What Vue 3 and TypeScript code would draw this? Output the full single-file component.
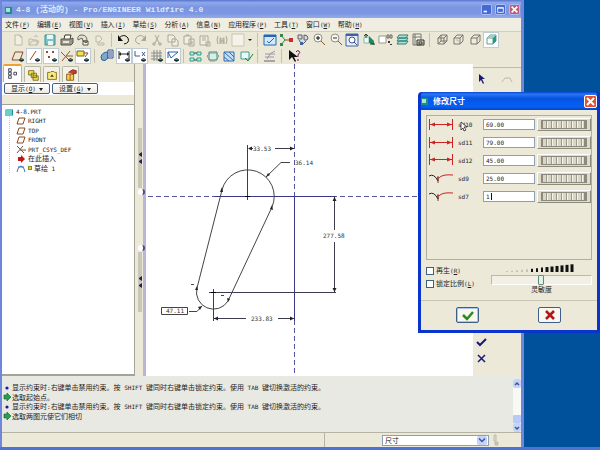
<script setup lang="ts">
import { ref } from 'vue'

// [path, stroke, fill]
type Shape = [string, string, string]
interface Tool { name: string; art: string; on?: boolean; off?: boolean }
interface Group { key: string; tools: Tool[] }

const INK = '#33332c'
const DIM = '#bdb9a8'
const GRN = '#2e9a86'
const NO = 'none'
const EYE: Shape[] = [
  ['M9 12q2.500-3 5 0q-2.500 3-5 0z', '#2b4a50', '#5c8a8c'],
  ['M10 12h3v1h-3z', NO, '#10282c'],
]
const cube = 'M4 6h6v6h-6zM4 6l3-3h6l-3 3M13 3v6l-3 3'

const art: Record<string, Shape[]> = {
  new: [['M5 3h5l2 2v8h-7zM10 3v2h2', DIM, '#f1efe2']],
  open: [['M3 13v-6h3l1 1h4v5zM3 13l3-4h7l-2 4M8 5q2-3 4 0', DIM, NO]],
  save: [['M3 3h10v10h-10z', '#3d8f94', '#7cc4c4'], ['M5 3h6v4h-6zM6 9h5v4h-5z', NO, '#e8f6f4']],
  print: [['M5 7l1-4h6l-1 4', INK, '#ffffff'], ['M2 7h10l2-1v5l-2 2h-10z', '#55554c', '#9a988c'], ['M4 9h6v2h-6z', NO, '#e9e6d8']],
  mail: [['M3 8q-1-5 4-5q5 0 5 6h-4l-1-3z', '#66665c', '#e4e2d6'], ['M8 9h5v4h-5zM8 9l3 2 2-2', '#55554c', '#fff']],
  link: [['M5 4h4l2 3-3 3h-3zM7 11h6v2h-6z', DIM, '#efecdf']],
  undo: [['M3 6q5-5 9 0q2 5-4 6', '#111', NO], ['M2 3v6h5z', NO, '#111']],
  redo: [['M13 6q-5-5-9 0q-2 5 4 6', '#aaa798', NO], ['M14 3v6h-5z', NO, '#aaa798']],
  cut: [['M6 3l4 8M10 3l-4 8M4 11h2v2h-2zM10 11h2v2h-2z', '#aaa798', NO]],
  copy: [['M3 3h5l2 2v5h-7zM7 7h4l2 2v5h-6z', '#aaa798', '#f1efe2']],
  paste: [['M3 4h7v8h-7zM5 3h3M8 7h5v7h-5zM9 10h3M9 12h3', '#aaa798', '#f1efe2']],
  special: [['M3 4h8v9h-8zM5 6h4M5 8h4M9 10h4v4h-4z', '#aaa798', '#f1efe2']],
  find: [['M4 4q-2 4 0 8M12 4q2 4 0 8M6 12v-6h1v6M10 12v-6h-1v6M6 9h4', '#aaa798', NO]],
  box: [['M2 2h12v12h-12z', '#c9c5b2', '#f5f3e9']],
  win: [['M2 3h12v10h-12z', '#2466b4', '#d3e9fb'], ['M2 3h12v2h-12z', NO, '#2466b4'], ['M5 9l2 2 5-5', '#2466b4', NO]],
  spin: [['M3 3l4 5-4 5', '#2c8a50', NO], ['M7 8h7', '#c03030', NO], ['M2 2h3v3h-3zM2 11h3v3h-3z', NO, '#2c8a50'], ['M11 6h4v4h-4z', NO, '#c03030']],
  orient: [['M3 3h4v4h-4zM9 3q4 0 4 3t-4 2zM4 8l3 5 4-4', '#5a5e70', '#d8d8e0'], ['M5 10h3v3h-3z', NO, '#4064a0']],
  zin: [['M3 6a4 4 0 1 0 8 0a4 4 0 1 0-8 0', '#8f8f86', '#f8f6ee'], ['M5 6h4M7 4v4', '#111', NO], ['M10 9l4 4', '#8a5a20', NO]],
  zout: [['M3 6a4 4 0 1 0 8 0a4 4 0 1 0-8 0', '#8f8f86', '#f8f6ee'], ['M5 6h4', '#333', NO], ['M10 9l4 4', '#8a5a20', NO]],
  fit: [['M2 2h12v12h-12z', '#3d62a8', '#e8f0fb'], ['M2 2h12v2h-12z', NO, '#3d62a8'], ['M5 8a3 3 0 1 0 6 0a3 3 0 1 0-6 0M10 10l3 3', '#3d5288', '#fff']],
  reor: [['M3 5h5v6h-5z', '#8fb8a8', '#e5fff6'], ['M8 4v7l5 2v-4z', NO, '#1c8a5c'], ['M5 2v4M3 4l2-2 2 2M9 12h5', INK, NO]],
  views: [['M2 4h7v7h-7z', '#99968a', '#fff'], ['M10 3h2v3h-2zM13 3h2v3h-2z', '#66665c', NO], ['M11 9h2v2h-2zM13 12h2v1h-2z', NO, '#3a3a3a']],
  layers: [['M3 6l2-3h9l-2 3zM3 9l2-3h9l-2 3zM3 12l2-3h9l-2 3z', '#337f74', '#a9e6d8']],
  vmgr: [['M3 2h8v11h-8zM5 2v11M3 5h8', '#77776c', '#f3f1e6'], ['M7 8h7v5h-7z', INK, '#d0cec0'], ['M9 10h3v2h-3z', INK, '#fff']],
  wire: [[cube + 'M4 12l3-3h6M7 3v6', '#77776c', NO]],
  hid: [[cube, '#77776c', '#efecdf'], ['M7 9h3M7 6v3', '#bbb8a8', NO]],
  nohid: [[cube, '#77776c', '#efecdf']],
  shade: [[cube, '#6a9c94', '#f6fffb'], ['M10 6l3-3v6l-3 3z', NO, '#1b9d86'], ['M4 6l3-3h6l-3 3z', NO, '#8fd7ca']],
  plane: [['M2 12l3-8h8l-3 8z', '#8a4a28', NO], ...EYE],
  axis: [['M4 12l6-9', '#9a4a20', NO], ...EYE],
  pts: [['M3 3l2 2M5 3l-2 2M9 3l2 2M11 3l-2 2M5 8l2 2M7 8l-2 2', '#9a4a20', NO], ...EYE],
  csys: [['M2 4l9 9M11 3l-8 10M7 8h7', '#9a5a28', NO], ...EYE],
  note: [['M2 3h7v5h-7z', '#6a6420', '#f4e24c'], ['M9 5h4l-3 4', '#8a4a28', NO], ...EYE],
  skview: [['M2 9q1-5 7-5v6q-3 4-6 2z', '#2c5f90', '#79a9cc'], ['M9 2h5v8h-5z', '#30508c', '#eef4ff'], ['M10 4h3M10 6h3M10 8h3', '#30508c', NO]],
  dims: [['M3 3v8M13 3v8M3 6h10', '#222', NO], ['M3 6l2-2v4zM13 6l-2-2v4z', NO, '#222'], ...EYE],
  cons: [['M3 3v5h5M10 4l3 4M13 4l-3 4', '#3a5a9c', NO], ...EYE],
  grid: [['M5 2v11M8 2v11M11 2v8M2 5h11M2 8h11M2 11h7', '#8a8a90', NO], ...EYE],
  vert: [['M3 4h10l-7 6zM3 4v6', '#2f5fa8', NO], ...EYE],
  ends: [['M2 4h4v3h-4zM9 4h4v3h-4zM2 10h4v3h-4zM9 10h4v3h-4z', '#2f9c90', '#bdeee4'], ['M6 5h3M6 12h3', '#444', NO]],
  sel: [['M4 4h8v8h-8z', '#3d8f78', '#d8efe4'], ['M2 8l3-3 6 0 3 3-4 5h-5z', '#8b9a9c', NO]],
  hatch: [['M3 4h10v9h-10z', '#2f6fb4', '#c4def4'], ['M3 4l10 9M3 9l5 4M8 4l5 5', '#2f6fb4', NO]],
  ok: [['M3 4h8v7h-8z', '#459a90', '#e8faf4'], ['M7 10l3 3 5-7', '#158a30', NO]],
  sketch: [['M3 6h10M3 9h9M5 11q3-7 8-8', '#9a96ac', NO], ['M2 13h11', '#66607c', NO]],
  help: [['M3 2v10l3-3 3 5 1-1-2-4h4z', NO, '#111'], ['M10 4q1-2 3-1q2 1-1 4v2M12 11v2', '#7a1050', NO]],
}

const t = (s: string, on = ''): Tool[] =>
  s.split(' ').map((a) => ({ name: a, art: a, on: on.split(' ').includes(a) }))

const bars: Group[][] = [
  [
    { key: 'file', tools: t('new open save print mail link') },
    { key: 'edit', tools: t('undo redo cut copy paste special find box') },
    { key: 'view', tools: t('win spin orient zin zout fit reor views layers vmgr') },
    { key: 'model', tools: t('wire hid nohid shade', 'shade') },
  ],
  [
    { key: 'datum', tools: t('plane axis pts csys note', 'axis pts note') },
    { key: 'sketcher', tools: t('skview dims cons grid vert', 'dims cons vert') },
    { key: 'diagnose', tools: t('ends sel hatch ok') },
    { key: 'single', tools: t('sketch') },
    { key: 'single', tools: t('help') },
  ],
]

const menus = [
  ['文件', 'F'], ['编辑', 'E'], ['视图', 'V'], ['插入', 'I'], ['草绘', 'S'], ['分析', 'A'],
  ['信息', 'N'], ['应用程序', 'P'], ['工具', 'T'], ['窗口', 'W'], ['帮助', 'H'],
]

const tree = [
  { kind: 'plane', text: 'RIGHT' },
  { kind: 'plane', text: 'TOP' },
  { kind: 'plane', text: 'FRONT' },
  { kind: 'csys', text: 'PRT_CSYS_DEF' },
  { kind: 'insert', text: '在此插入' },
  { kind: 'sketch', text: '草绘 1' },
]

const hint = '显示约束时:右键单击禁用约束。按 SHIFT 键同时右键单击锁定约束。使用 TAB 键切换激活的约束。'
const messages = [
  { step: false, text: hint },
  { step: true, text: '选取起始点。' },
  { step: false, text: hint },
  { step: true, text: '选取两图元使它们相切' },
]
// Splits mixed text so that Latin runs can take the half-width face.
const runs = (s: string) =>
  s.split(/([\x20-\x7e]+)/).filter(Boolean).map((x) => ({ x, latin: /^[\x20-\x7e]/.test(x) }))

const dims = ref([
  { id: 'sd10', value: '69.00', tangent: false },
  { id: 'sd11', value: '79.00', tangent: false },
  { id: 'sd12', value: '45.00', tangent: false },
  { id: 'sd9', value: '25.00', tangent: true },
  { id: 'sd7', value: '1', tangent: true },
])
const sensitivity = ref(49)
const regen = ref(false)
const lock = ref(false)
const filter = ref('尺寸')
</script>

<template>
  <div class="desktop">
    <main class="window">
      <header class="titlebar">
        <svg class="app-icon" viewBox="0 0 8 8"><path d="M0 1h7v7h-7z" fill="#1f8f80" /><path d="M1 2h4v4h-4z" fill="#9fe8d8" /></svg>
        <h1><span v-for="(r, i) in runs('4-8 (活动的) - Pro/ENGINEER Wildfire 4.0')" :key="i" :class="{ wide: r.latin }">{{ r.x }}</span></h1>
        <div class="caption">
          <button aria-label="最小化"><svg viewBox="0 0 11 11"><path d="M2 8h4" stroke="#fff" stroke-width="2" /></svg></button>
          <button aria-label="最大化"><svg viewBox="0 0 11 11"><path d="M2 3h7v6h-7zM2 4h7" stroke="#fff" fill="none" /></svg></button>
          <button class="close" aria-label="关闭"><svg viewBox="0 0 11 11"><path d="M2 2l7 7M9 2l-7 7" stroke="#fff" stroke-width="2" /></svg></button>
        </div>
      </header>

      <nav class="menubar">
        <button v-for="m in menus" :key="m[1]">{{ m[0] }}<span class="latin">(<u>{{ m[1] }}</u>)</span></button>
      </nav>

      <div class="toolbars">
        <div v-for="(bar, b) in bars" :key="b" class="toolbar">
          <div v-for="(g, gi) in bar" :key="gi" class="group" :class="g.key">
            <button v-for="tool in g.tools" :key="tool.name" :class="{ on: tool.on }" :aria-label="tool.name">
              <svg viewBox="0 0 16 16"><path v-for="(s, i) in art[tool.art]" :key="i" :d="s[0]" :stroke="s[1]" :fill="s[2]" /></svg>
            </button>
            <span v-if="g.key === 'edit'" class="drop"></span>
          </div>
        </div>
      </div>

      <div class="work">
        <aside class="navigator">
          <div class="tabs">
            <button class="active" aria-label="模型树"><svg viewBox="0 0 16 16"><path d="M3 2h3v3h-3zM3 6h3v3h-3zM3 10h3v3h-3zM9 6h3v3h-3z" fill="#fff" stroke="#33334a" /></svg></button>
            <button aria-label="文件夹"><svg viewBox="0 0 16 16"><path d="M3 3h6v5h-6zM6 6h6v5h-6zM8 9h6v5h-6z" fill="#f2e254" stroke="#7a6a18" /></svg></button>
            <button aria-label="收藏夹"><svg viewBox="0 0 16 16"><path d="M3 5h3l1-1h3l1 1h2v8h-10z" fill="#f7ec7a" stroke="#7a6a18" /><path d="M8 7l2 3h-4z" fill="#333" /></svg></button>
            <button aria-label="连接"><svg viewBox="0 0 16 16"><path d="M3 7h8v7h-8z" fill="#f2d24c" stroke="#7a5a18" /><path d="M5 5l5-3 4 1v3l-4 1" fill="#c8402c" stroke="#70281c" /><path d="M7 7v7" stroke="#b04828" /></svg></button>
          </div>
          <div class="actions">
            <button>显示<span class="latin">(<u>O</u>)</span><i class="caret"></i></button>
            <button>设置<span class="latin">(<u>G</u>)</span><i class="caret"></i></button>
          </div>
          <div class="tree">
            <p><svg class="part" viewBox="0 0 8 8"><path d="M0 2l1-1h7l-1 1zM0 2h7v6h-7z" fill="#68cfd0" /><path d="M7 2l1-1v6l-1 1z" fill="#1f8c94" /></svg><span class="latin">4-8.PRT</span></p>
            <ul>
              <li v-for="n in tree" :key="n.text">
                <svg viewBox="0 0 10 9">
                  <path v-if="n.kind === 'plane'" d="M1 8l2-6h6l-2 6z" fill="none" stroke="#8a4a20" />
                  <path v-else-if="n.kind === 'csys'" d="M1 1l7 7M7 1l-6 7M4 5h6" fill="none" stroke="#75543c" />
                  <path v-else-if="n.kind === 'insert'" d="M2 3h3v-2l4 4-4 4v-2h-3z" fill="#c01818" />
                  <path v-else d="M1 8q1-6 4-6t4 6M2 3h6" fill="none" stroke="#3f74c0" />
                </svg>
                <i v-if="n.kind === 'sketch'" class="flag"></i>
                <span><span v-for="(r, i) in runs(n.text)" :key="i" :class="{ latin: r.latin }">{{ r.x }}</span></span>
              </li>
            </ul>
          </div>
        </aside>

        <div class="splitter">
          <button class="grip" aria-label="收起导航器"><i></i><i></i></button>
          <div class="knobs"><i></i><i></i></div>
          <button class="grip" aria-label="收起浏览器"><i></i><i></i></button>
        </div>

        <svg class="canvas" aria-label="草绘">
          <g transform="translate(-146 -64)" fill="none">
            <g stroke="#5654a4" stroke-dasharray="5 3"><path d="M148 196.500H900M294.500 64V900" /></g>
            <g stroke="#3c3c50">
              <path d="M215 196.500H336M294.500 196V321" stroke="#3a388a" />
              <path d="M247.500 145V200M209 292.500H336M213.500 289V321M334.500 196V230M334.500 242V292M249 148.500H253M275 148.500H294M214 318.500H246M278 318.500H294" />
              <path d="M245 196.500h5M211 292.500h5" stroke="#000" />
            </g>
            <g stroke="#444">
              <path d="M222 190A26.500 26.500 0 1 1 272 207L228 301A17 17 0 0 1 197 288Z" />
              <path d="M266 177L281 162.500H290M189 311.500H197L202 306M191 284.500h3M221 295.500h3" />
              <path d="M161.500 307.500h26v7h-26z" />
            </g>
            <g fill="#222">
              <path d="M248 148.500l4-2v4zM294 148.500l-4-2v4zM214 318.500l4-2v4zM294 318.500l-4-2v4zM334.500 197l-2 4h4zM334.500 292l-2-4h4zM266 177l2-4 2 2zM202 306l-4 1 2 3z" />
              <path d="M222 187l-2 5h3zM197 286l-2 4h3zM272 205l-2 4 3 1zM228 302l-1-4 3 1z" />
            </g>
            <g class="dimtext">
              <text x="253" y="151">33.53</text><text x="295" y="165">36.14</text>
              <text x="323" y="238">277.58</text><text x="251" y="321">233.83</text>
              <text x="166" y="313">47.11</text>
            </g>
          </g>
        </svg>

        <aside class="sidebar">
          <div>
            <button aria-label="选取"><svg viewBox="0 0 12 12"><path d="M4 1v8l2-2 2 4 1-1-2-4h3z" fill="#1c1878" /></svg></button>
            <button aria-label="曲线"><svg viewBox="0 0 12 12"><path d="M1 9l3-4 5 0 2 4" fill="none" stroke="#bdb9a8" /></svg></button>
          </div>
          <div class="finish">
            <button aria-label="完成"><svg viewBox="0 0 12 12"><path d="M2 6l3 3 6-6" fill="none" stroke="#1c1878" stroke-width="2" /></svg></button>
            <button aria-label="退出"><svg viewBox="0 0 12 12"><path d="M3 3l7 7M10 3l-7 7" fill="none" stroke="#1c1878" stroke-width="1.500" /></svg></button>
          </div>
        </aside>
      </div>

      <section class="messages">
        <ul>
          <li v-for="(m, i) in messages" :key="i">
            <svg viewBox="0 0 8 8"><path v-if="m.step" d="M1 2h3v-2l4 4-4 4v-2h-3z" fill="#23a050" stroke="#0c5c2c" stroke-width=".6" /><circle v-else cx="4" cy="4" r="1.600" fill="#1a1aa0" /></svg>
            <span><span v-for="(r, k) in runs(m.text)" :key="k" :class="{ latin: r.latin }">{{ r.x }}</span></span>
          </li>
        </ul>
        <div class="scroll">
          <button aria-label="向上"><svg viewBox="0 0 8 8"><path d="M2 5l2-2 2 2" fill="none" stroke="#3c5696" stroke-width="1.500" /></svg></button>
          <i></i>
          <button aria-label="向下"><svg viewBox="0 0 8 8"><path d="M2 3l2 2 2-2" fill="none" stroke="#3c5696" stroke-width="1.500" /></svg></button>
        </div>
      </section>

      <footer class="status">
        <span class="pane"></span>
        <div class="filter">
          <select v-model="filter" aria-label="过滤器"><option>尺寸</option></select>
          <svg viewBox="0 0 10 8"><path d="M2 2l3 3 3-3" fill="none" stroke="#3c5696" stroke-width="1.500" /></svg>
        </div>
        <svg class="lamp" viewBox="0 0 8 12"><path d="M2 1h2v6h-2z" fill="#e2dfce" stroke="#bdbaa8" /><path d="M3 8h3v3h-3z" fill="#c9c5b2" stroke="#bdbaa8" /></svg>
      </footer>
    </main>

    <section class="dialog" role="dialog" aria-labelledby="dlg-title">
      <header>
        <svg class="app-icon" viewBox="0 0 8 8"><path d="M0 1h7v7h-7z" fill="#1f8f80" /><path d="M1 2h4v4h-4z" fill="#9fe8d8" /></svg>
        <h2 id="dlg-title">修改尺寸</h2>
        <button class="close" aria-label="关闭"><svg viewBox="0 0 11 11"><path d="M2 2l7 7M9 2l-7 7" stroke="#fff" stroke-width="2" /></svg></button>
      </header>
      <div class="dialog-body">
        <div class="list">
          <div class="rows">
            <div v-for="d in dims" :key="d.id" class="dim">
              <svg viewBox="0 0 24 12">
                <g v-if="!d.tangent"><path d="M.5 0v11M23.500 0v11M1 5.500h22" stroke="#cc2424" fill="none" /><path d="M1 5.500l5-2v4zM23 5.500l-5-2v4z" fill="#cc2424" /></g>
                <g v-else fill="none"><path d="M0 4q5-3 9 5V5" stroke="#222" /><path d="M10 6q3-4 14-3" stroke="#cc2424" /><path d="M9 4v7" stroke="#933" /></g>
              </svg>
              <label class="latin" :for="d.id">{{ d.id }}</label>
              <input :id="d.id" v-model="d.value" type="text" :class="{ typing: d.id === 'sd7' }" />
              <button class="wheel" :aria-label="d.id + ' 调整'"><i></i></button>
            </div>
          </div>
          <svg class="pointer" viewBox="0 0 8 12"><path d="M1 1v8l2-2 1 3 2-1-2-3h3z" fill="#fff" stroke="#222" stroke-width=".8" /></svg>
        </div>
        <div class="options">
          <div class="checks">
            <label><input v-model="regen" type="checkbox" />再生<span class="latin">(<u>R</u>)</span></label>
            <label><input v-model="lock" type="checkbox" />锁定比例<span class="latin">(<u>L</u>)</span></label>
          </div>
          <div class="sense">
            <svg viewBox="0 0 70 9"><path v-for="n in 14" :key="n" :d="`M${n * 5 - 3} 8v${-Math.max(1, n * 0.55)}`" stroke="#111" :stroke-width="n < 6 ? 1 : n < 9 ? 2 : 3" :opacity="n < 6 ? 0.35 : 1" /></svg>
            <input id="sense" v-model="sensitivity" type="range" />
            <label for="sense">灵敏度</label>
          </div>
        </div>
        <div class="buttons">
          <button class="default" aria-label="确定"><svg viewBox="0 0 12 12"><path d="M1 6l4 4 6-7" fill="none" stroke="#2e8a1c" stroke-width="2.500" /></svg></button>
          <button aria-label="取消"><svg viewBox="0 0 12 12"><path d="M2 2l8 8M10 2l-8 8" fill="none" stroke="#b01818" stroke-width="2.500" /></svg></button>
        </div>
      </div>
    </section>
  </div>
</template>

<style>
html, body { margin: 0; background: #00519b; }
</style>

<style scoped>
.desktop {
  position: relative;
  display: flex;
  min-height: 100vh;
  box-sizing: border-box;
  padding-right: 76px;
  background: #00519b;
  border-bottom: 3px solid #4d74d4;
  color: #1c1c1c;
  font: 7px/9px "Liberation Sans", "Noto Sans CJK SC", sans-serif;
}
.desktop *, .desktop *::before { box-sizing: border-box; }
button, input, select { margin: 0; padding: 0; border: 0; background: none; color: inherit; font: inherit; }
ul, p, h1, h2 { margin: 0; padding: 0; list-style: none; font-size: inherit; }
svg { display: block; flex: none; }
.latin { font-family: "DejaVu Sans Mono", monospace; font-size: 6px; white-space: pre; }
u { text-underline-offset: 1px; }

.window {
  flex: 1;
  min-width: 0;
  display: flex;
  flex-direction: column;
  border: solid #6f86dc;
  border-width: 0 3px 0 2px;
  background: #ece9d8;
}
.titlebar {
  display: flex;
  align-items: center;
  gap: 3px;
  height: 18px;
  padding: 1px 1px 0 3px;
  background: linear-gradient(#5874cc, #8fa9ee 15%, #7b95e0 40%, #7d98e2 75%, #93a9ea);
  color: #dfe6fb;
}
.app-icon { width: 8px; height: 8px; }
h1 { flex: 1; font-size: 8px; font-weight: bold; white-space: pre; }
h1 .wide { font-family: "Liberation Mono", monospace; }
.caption { display: flex; gap: 3px; }
.caption button, .close {
  width: 11px;
  height: 11px;
  border: 1px solid #a9bcf4;
  border-radius: 2px;
  background: #4468d4;
}
.caption svg, .close svg { width: 9px; height: 9px; }
.caption .close { background: #bd5d74; }

.menubar { display: flex; gap: 7px; height: 13px; padding-left: 3px; align-items: center; background: #f0eee2; }
.menubar button { white-space: nowrap; }

.toolbars { height: 33px; border-top: 1px solid #d2cfbe; background: #ebe8d7; }
.toolbar { display: flex; height: 16px; padding-left: 8px; }
.group { position: relative; display: flex; justify-content: space-between; }
.group + .group { margin-left: 15px; }
.group + .group::before { content: ""; position: absolute; left: -5px; top: 1px; width: 1px; height: 14px; background: #c5c1ae; }
.group button { width: 16px; height: 16px; }
.group button.on { background: #fff; box-shadow: inset 0 0 0 1px #c0cbd2; }
.group svg { width: 16px; height: 16px; }
.group path { stroke-width: 1; }
.file { width: 97px; }
.edit { width: 130px; }
.group.edit { margin-left: 9px; }
.group.view { margin-left: 16px; width: 164px; }
.group.model { margin-left: 8px; width: 65px; }
.datum { width: 81px; }
.group.sketcher { margin-left: 8px; width: 82px; }
.group.diagnose { margin-left: 7px; width: 66px; }
.group.single { margin-left: 8px; width: 16px; }
.drop { position: absolute; left: 132px; top: 7px; border: 2px solid transparent; border-top-color: #222; }

.work { flex: 1; display: flex; min-height: 312px; background: #ece9d8; }
.navigator { width: 133px; display: flex; flex-direction: column; border-right: 1px solid #a5a394; border-bottom: 2px solid #a5a394; }
.tabs { display: flex; gap: 2px; height: 18px; padding-left: 1px; }
.tabs button { width: 17px; height: 16px; margin-top: 2px; border: 1px solid #b9b7a8; border-bottom: 0; border-radius: 2px 2px 0 0; background: #f3f1e6; }
.tabs .active { width: 19px; height: 18px; margin-top: 0; border-top: 2px solid #f0a030; background: #fff; }
.tabs svg { width: 14px; height: 14px; margin: auto; }
.actions { display: flex; gap: 2px; height: 13px; padding: 1px 2px; background: #fff; }
.actions button {
  display: flex;
  align-items: center;
  justify-content: center;
  width: 46px;
  height: 11px;
  border: 1px solid #44608c;
  border-radius: 2px;
  background: linear-gradient(#fff, #ecebe4);
}
.caret { margin: 3px 0 0 3px; border: 2px solid transparent; border-top: 3px solid #222; }
.tree { flex: 1; margin-top: 9px; padding: 2px 3px; border-top: 1px solid #a5a394; background: #fff; }
.tree p { display: flex; align-items: center; gap: 3px; height: 9px; }
.part { width: 8px; height: 8px; }
.tree ul { display: grid; grid-auto-rows: 1fr; height: 57px; margin-left: 4px; padding-left: 6px; border-left: 1px dotted #c9c9c9; }
.tree li { display: flex; align-items: center; gap: 2px; white-space: pre; }
.tree li svg { width: 10px; height: 9px; }
.flag { width: 4px; height: 4px; background: #d8d048; border: 1px solid #8c8c20; }

.splitter {
  display: flex;
  flex-direction: column;
  width: 11px;
  padding: 64px 4px 0 3px;
  border-right: 3px solid #b7b6d6;
  background: #ece9d8;
}
.grip { display: flex; flex-direction: column; align-items: center; justify-content: center; gap: 2px; width: 4px; height: 60px; background: #c9c8b8; }
.grip i { width: 4px; height: 5px; border: solid transparent; border-width: 2px 3px 2px 0; border-right-color: #20205c; }
.knobs { display: flex; flex-direction: column; justify-content: space-between; height: 64px; padding: 1px 0; }
.knobs i { width: 7px; height: 6px; border-radius: 3px; border-right: 2px solid #4c4a80; background: #fff; }

.canvas { flex: 1; min-width: 0; align-self: stretch; height: auto; overflow: hidden; background: #fff; }
.dimtext { fill: #333; font: 6px "DejaVu Sans Mono", monospace; }

.sidebar { display: flex; flex-direction: column; justify-content: space-between; width: 48px; margin-top: 3px; border-top: 1px solid #bdbaa8; padding: 5px 3px 12px 2px; }
.sidebar > div { display: flex; gap: 14px; }
.sidebar svg { width: 12px; height: 12px; }
.sidebar .finish { flex-direction: column; gap: 4px; }

.messages { display: flex; justify-content: space-between; height: 57px; border-bottom: 1px solid #b5b3a6; background: #e9e9e3; }
.messages ul { display: grid; grid-auto-rows: 1fr; height: 38px; margin: 7px 0 0 1px; }
.messages li { display: flex; align-items: center; gap: 1px; white-space: pre; }
.messages li svg { width: 8px; height: 8px; }
.scroll { display: flex; flex-direction: column; width: 8px; margin-top: 3px; background: #f8f8f4; }
.scroll button { width: 8px; height: 9px; border-radius: 2px; background: #c4d3f8; }
.scroll svg { width: 8px; height: 8px; }
.scroll i { height: 8px; margin-top: auto; border-radius: 1px; background: #b8caf6; }

.status { display: flex; align-items: center; height: 14px; background: #ece9d8; }
.pane { flex: 1; height: 14px; border-right: 1px solid #b5b3a6; }
.filter { position: relative; width: 107px; height: 11px; margin-left: 57px; border: 1px solid #8ba0b8; background: #fff; }
.filter select { display: block; width: 100%; height: 9px; padding-left: 2px; appearance: none; line-height: 9px; }
.filter svg { position: absolute; right: 1px; top: 0; width: 10px; height: 9px; border-radius: 2px; background: #c4d3f8; pointer-events: none; }
.lamp { width: 8px; height: 12px; margin: 0 21px 0 3px; }

.dialog {
  position: absolute;
  top: 92px;
  right: 0;
  width: 182px;
  border: 3px solid #0a35cc;
  border-top: 0;
  border-radius: 4px 4px 0 0;
  background: #0a35cc;
}
.dialog header { display: flex; align-items: center; gap: 4px; height: 18px; background: linear-gradient(#0a45d8, #2a78f4 12%, #0454e2 35%, #0660f4 80%, #0346c6); border-radius: 3px 3px 0 0; color: #fff; }
h2 { flex: 1; font-size: 8px; font-weight: bold; }
.dialog .close { width: 13px; height: 13px; background: #e0532c; border-color: #fff; }
.dialog .close svg { width: 11px; height: 11px; }
.dialog-body { padding: 5px 5px 0; background: #ece9d8; }
.list { position: relative; height: 145px; padding-left: 2px; border: 1px solid #b0ae9e; }
.rows { display: grid; grid-auto-rows: 1fr; height: 89px; }
.dim { display: flex; align-items: center; }
.dim > svg { width: 24px; height: 12px; }
.dim label { width: 25px; margin-left: 5px; }
.dim input { width: 52px; height: 11px; padding-left: 2px; border: 1px solid #8ba0b8; background: #fff; font: 6px/9px "DejaVu Sans Mono", monospace; }
.dim .typing { background: #fff linear-gradient(#111, #111) 7px 1px / 1px 7px no-repeat; }
.wheel { width: 54px; height: 13px; margin-left: 2px; padding: 1px 3px; border: 1px solid; border-color: #fff #8c8a7c #8c8a7c #fff; background: #dedbca; }
.wheel i { display: block; height: 9px; border: 1px solid #8c8a7c; border-width: 1px 3px 1px 2px; background: repeating-linear-gradient(90deg, #d9d6c6 0 3px, #9c9a8c 3px 4px, #f5f3e8 4px 5px); }
.pointer { position: absolute; left: 33px; top: 5px; width: 8px; height: 12px; }
.options { display: flex; justify-content: space-between; padding-top: 4px; height: 40px; }
.checks { display: flex; flex-direction: column; gap: 4px; padding-top: 2px; }
.checks label { display: flex; align-items: center; height: 9px; }
.checks input { appearance: none; width: 8px; height: 8px; margin-right: 2px; border: 1px solid #3c6080; background: #fff; }
.sense { display: flex; flex-direction: column; align-items: center; width: 101px; }
.sense svg { width: 70px; height: 9px; margin-right: 4px; }
.sense input { appearance: none; width: 100%; height: 10px; margin-top: 2px; border: 1px solid; border-color: #bcb9a8 #fff #fff #bcb9a8; background: #f2f0e5; }
.sense input::-webkit-slider-thumb { appearance: none; width: 6px; height: 10px; border: 1px solid #5c8c7c; border-radius: 1px; background: #e4f2e8; }
.buttons { display: flex; justify-content: space-between; margin: 0 -5px; padding: 6px 36px 7px 35px; border-top: 1px solid #c9c6b4; }
.buttons button { display: grid; place-items: center; width: 23px; height: 16px; border: 1px solid #3c5f8c; border-radius: 2px; background: #f8f7f0; }
.buttons .default { box-shadow: inset 0 0 0 1px #a9c4f0; }
.buttons svg { width: 12px; height: 12px; }
</style>
